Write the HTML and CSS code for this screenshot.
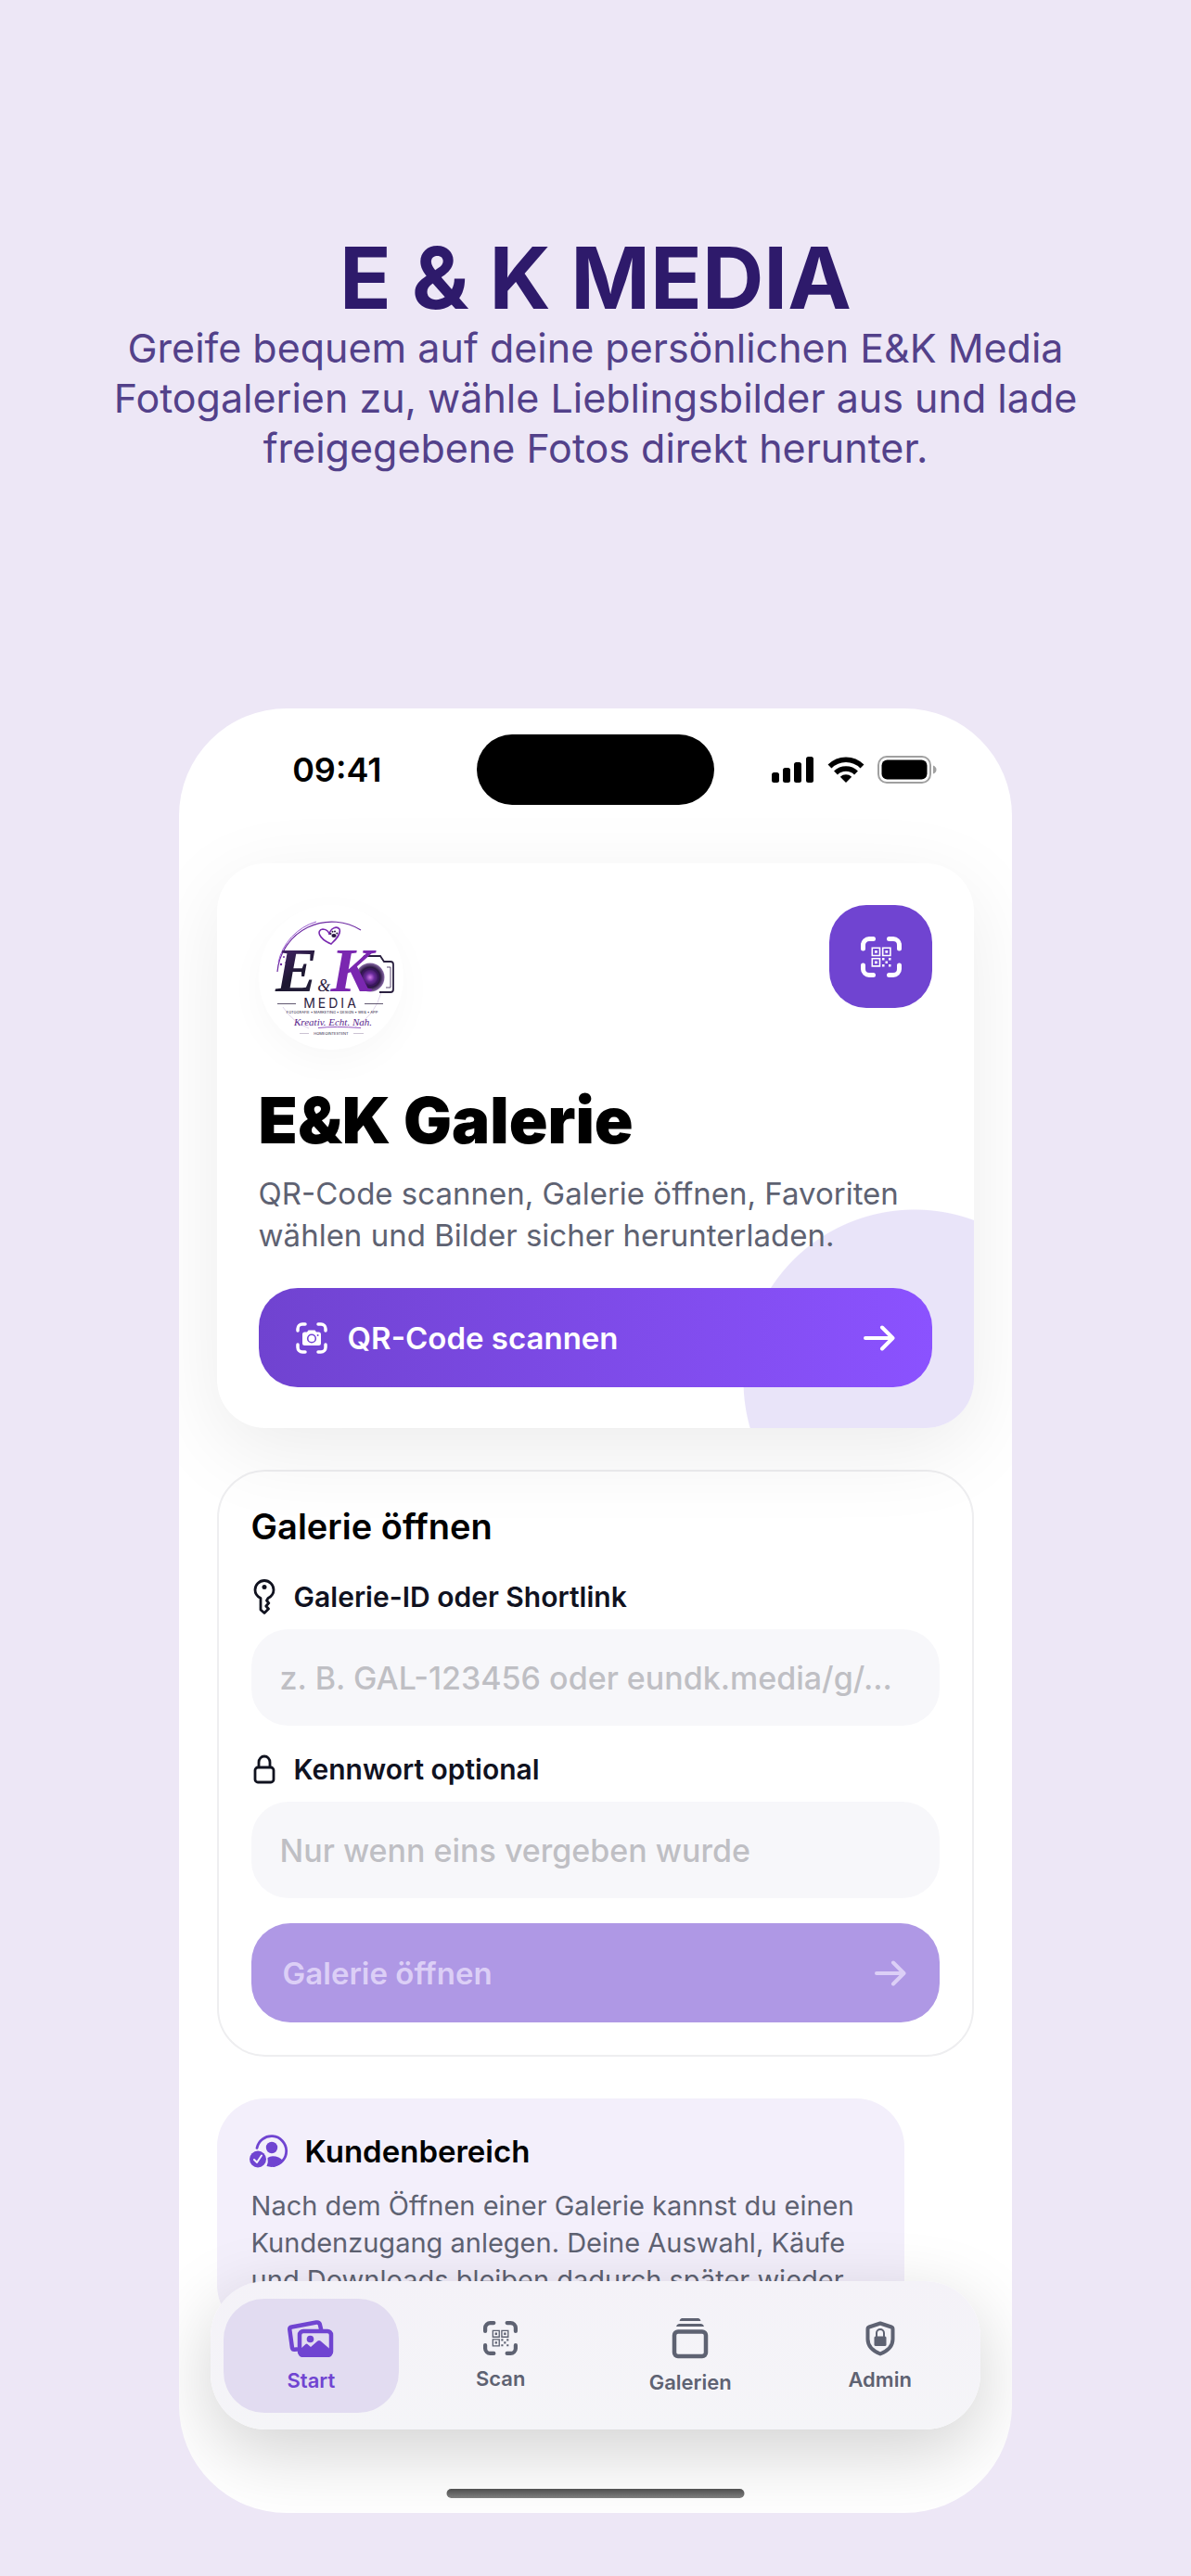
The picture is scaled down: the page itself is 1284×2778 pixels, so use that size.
FILE: index.html
```html
<!DOCTYPE html>
<html lang="de">
<head>
  <meta charset="UTF-8" />
  <meta name="viewport" content="width=device-width, initial-scale=1" />
  <title>E &amp; K MEDIA</title>
  <link rel="stylesheet" href="styles.css">
</head>
<body>
  <!-- shared symbols -->
  <svg class="symbols" aria-hidden="true">
    <symbol id="icon-qr" viewBox="0 0 44 44">
      <g fill="none" stroke="currentColor" stroke-width="5" stroke-linecap="round">
        <path d="M2.5 13V9A6.500 6.500 0 0 1 9 2.500H13.500M30.500 2.500H35A6.500 6.500 0 0 1 41.500 9V13M41.500 31V35A6.500 6.500 0 0 1 35 41.500H30.500M13.500 41.500H9A6.500 6.500 0 0 1 2.500 35V31"/>
      </g>
      <g fill="none" stroke="currentColor" stroke-width="1.600">
        <path d="M12.300 12.300h8.200v8.200h-8.200zM23.700 12.300h8.200v8.200h-8.200zM12.300 23.700h8.200v8.200h-8.200z"/>
      </g>
      <path fill="currentColor" d="M15 15h2.800v2.800H15zM26.400 15h2.800v2.800h-2.800zM15 26.400h2.800v2.800H15zM23 23h2.500v2.500H23zM30 23h2.500v2.500H30zM26.500 26.500H29V29h-2.500zM23 30h2.500v2.500H23zM30 30h2.500v2.500H30z"/>
    </symbol>
    <symbol id="icon-arrow" viewBox="0 0 34 28">
      <path d="M2 14H31M20 2.500L31.500 14L20 25.500" fill="none" stroke="currentColor" stroke-width="4" stroke-linecap="round" stroke-linejoin="round"/>
    </symbol>
  </svg>

  <header class="intro">
    <h1>E &amp; K MEDIA</h1>
    <p>Greife bequem auf deine persönlichen E&amp;K Media Fotogalerien zu, wähle Lieblingsbilder aus und lade freigegebene Fotos direkt herunter.</p>
  </header>

  <div class="phone">
    <div class="status">
      <span class="time">09:41</span>
      <div class="island"></div>
      <div class="signals">
        <svg width="46" height="28" viewBox="0 0 46 28">
          <rect x="0" y="17" width="8" height="11" rx="2.500"/>
          <rect x="12" y="12" width="8" height="16" rx="2.500"/>
          <rect x="24" y="6" width="8" height="22" rx="2.500"/>
          <rect x="37" y="0" width="8" height="28" rx="2.500"/>
        </svg>
        <svg width="40" height="28" viewBox="0 0 40 28">
          <g fill="none" stroke="#000" stroke-width="5.500">
            <path d="M2.500 10.500A24.500 24.500 0 0 1 37.500 10.500"/>
            <path d="M9 17.500A15.500 15.500 0 0 1 31 17.500"/>
          </g>
          <path d="M20 28L13.800 21.800A9 9 0 0 1 26.200 21.800Z"/>
        </svg>
        <svg width="64" height="30" viewBox="0 0 64 30">
          <rect x="1" y="1" width="56" height="28" rx="9" fill="none" stroke="#a0a0a0" stroke-width="2"/>
          <rect x="4.500" y="4.500" width="49" height="21" rx="6"/>
          <path d="M60 10.500Q63.500 12 63.500 15T60 19.500Z" fill="#a0a0a0"/>
        </svg>
      </div>
    </div>

    <main class="content">
      <section class="card hero">
        <div class="hero-top">
          <div class="logo">
            <svg viewBox="8 6 156 156" role="img" aria-label="E&amp;K Media">
              <defs>
                <linearGradient id="ink" x1="0" y1="0" x2="1" y2="1">
                  <stop offset="0" stop-color="#5a2a86"/>
                  <stop offset=".4" stop-color="#1c1730"/>
                  <stop offset="1" stop-color="#3b3354"/>
                </linearGradient>
                <radialGradient id="lens">
                  <stop offset="0" stop-color="#d27bea"/>
                  <stop offset=".3" stop-color="#6a2a9c"/>
                  <stop offset=".7" stop-color="#2b1742"/>
                  <stop offset="1" stop-color="#8a6ba8"/>
                </radialGradient>
              </defs>
              <path d="M28 78A59 59 0 0 1 118 33" fill="none" stroke="#6e2ba3" stroke-width="1.200"/>
              <path d="M29 68A59 59 0 0 1 70 24" fill="none" stroke="#9a5cd0" stroke-width="1"/>
              <path d="M34 116A59 59 0 0 0 62 139M140 100A59 59 0 0 1 112 137" fill="none" stroke="#c9b8dc" stroke-width=".6"/>
              <!-- heart with paw -->
              <path d="M86 48C72 42 70 33 77 32C82 32 84 36 84 38C85 31 92 28 95 32C97 38 90 44 86 48Z" fill="none" stroke="#7a2bb0" stroke-width="1.600"/>
              <g fill="#2b1742"><ellipse cx="89" cy="39" rx="2.600" ry="2"/><circle cx="85.500" cy="37" r="1"/><circle cx="87.500" cy="34.800" r="1"/><circle cx="90" cy="34.500" r="1"/><circle cx="92.300" cy="36.500" r="1"/></g>
              <g fill="#6e2ba3"><circle cx="35" cy="62" r="1"/><circle cx="32" cy="70" r="1.200"/><circle cx="37" cy="68" r=".8"/></g>
              <!-- camera -->
              <path d="M118 66L122 61H139L143 67H150Q153 67 153 70V97Q153 100 150 100H138" fill="#fff" stroke="#2b2140" stroke-width="1.800"/>
              <path d="M146 73H150V95H145" fill="none" stroke="#5c4a73"/>
              <circle cx="128" cy="84" r="15.500" fill="url(#lens)"/>
              <circle cx="128" cy="84" r="9" fill="none" stroke="#3a1560" stroke-width="1.500"/>
              <text class="logo-script" x="26" y="99"><tspan class="logo-e">E</tspan><tspan class="logo-amp">&amp;</tspan><tspan class="logo-k">K</tspan></text>
              <path d="M28 112.500H48M122 112.500H142" stroke="#3a2f4c" stroke-width=".8"/>
              <text class="logo-name" x="86" y="117">MEDIA</text>
              <text class="logo-tag" x="87" y="123">FOTOGRAFIE • MARKETING • DESIGN • WEB • APP</text>
              <text class="logo-claim" x="88" y="136">Kreativ. Echt. Nah.</text>
              <path d="M72 138.500Q90 136.500 118 138.500" fill="none" stroke="#7a2bb0" stroke-width=".8"/>
              <path d="M52 144.500H62M110 144.500H121" stroke="#a79bb5" stroke-width=".6"/>
              <text class="logo-tag" x="86" y="146">HOMEOINTESTENT</text>
            </svg>
          </div>
          <button class="qr-button" type="button" aria-label="QR-Code scannen">
            <svg width="44" height="44"><use href="#icon-qr"/></svg>
          </button>
        </div>
        <h2>E&amp;K Galerie</h2>
        <p>QR-Code scannen, Galerie öffnen, Favoriten wählen und Bilder sicher herunterladen.</p>
        <button class="button primary" type="button">
          <svg width="34" height="34" viewBox="0 0 34 34">
            <path d="M2 9V7A5 5 0 0 1 7 2H10M24 2H27A5 5 0 0 1 32 7V9M32 24V27A5 5 0 0 1 27 32H24M10 32H7A5 5 0 0 1 2 27V24" fill="none" stroke="#fff" stroke-width="3.500" stroke-linecap="round"/>
            <path d="M9.500 10.500H12L13.500 8.500H20.500L22 10.500H24.500A2.500 2.500 0 0 1 27 13V22.500A2.500 2.500 0 0 1 24.500 25H9.500A2.500 2.500 0 0 1 7 22.500V13A2.500 2.500 0 0 1 9.500 10.500Z" fill="#fff"/>
            <circle cx="17" cy="17.500" r="4.300" fill="none" stroke="#7345d6" stroke-width="1.600"/>
            <circle cx="23.600" cy="14" r="1" fill="#7345d6"/>
          </svg>
          <span>QR-Code scannen</span>
          <svg class="arrow" width="34" height="28"><use href="#icon-arrow"/></svg>
        </button>
      </section>

      <form class="card open">
        <h3>Galerie öffnen</h3>
        <label for="gallery">
          <svg width="24" height="38" viewBox="0 0 24 38">
            <path d="M8 20.500V33L12 36.500L16.500 32L13.800 29L16.800 25.800L14.500 23L16 20.500Q22 17.500 22 11.500A10 10 0 0 0 2 11.500Q2 17.500 8 20.500Z" fill="none" stroke="currentColor" stroke-width="2.800" stroke-linejoin="round"/>
            <circle cx="12" cy="8.500" r="2.500" fill="currentColor"/>
          </svg>
          Galerie-ID oder Shortlink
        </label>
        <input id="gallery" type="text" placeholder="z. B. GAL-123456 oder eundk.media/g/...">
        <label for="password">
          <svg width="24" height="32" viewBox="0 0 24 32">
            <rect x="2" y="14" width="20" height="16" rx="3" fill="none" stroke="currentColor" stroke-width="2.800"/>
            <path d="M6 14V8.500A6 6.500 0 0 1 18 8.500V14" fill="none" stroke="currentColor" stroke-width="2.800"/>
          </svg>
          Kennwort optional
        </label>
        <input id="password" type="password" placeholder="Nur wenn eins vergeben wurde">
        <button class="button" type="submit" disabled>
          <span>Galerie öffnen</span>
          <svg class="arrow" width="34" height="28"><use href="#icon-arrow"/></svg>
        </button>
      </form>

      <section class="card customer">
        <h4>
          <svg width="42" height="36" viewBox="0 0 42 36">
            <path d="M8 14.500A16 16 0 1 1 26 33.500" fill="none" stroke="currentColor" stroke-width="2.800" stroke-linecap="round"/>
            <circle cx="24" cy="14" r="6.200" fill="currentColor"/>
            <path d="M18.500 34Q20.500 30 19.500 25Q22 23.300 25 23.300Q32 23.300 36 28Q31 35 23.500 35Z" fill="currentColor"/>
            <circle cx="9" cy="26.500" r="9" fill="currentColor"/>
            <path d="M5 27L8 30L13 22.500" fill="none" stroke="#f3effb" stroke-width="2" stroke-linecap="round" stroke-linejoin="round"/>
          </svg>
          Kundenbereich
        </h4>
        <p>Nach dem Öffnen einer Galerie kannst du einen Kundenzugang anlegen. Deine Auswahl, Käufe und Downloads bleiben dadurch später wieder</p>
      </section>
    </main>

    <nav class="tabs">
      <a class="tab active" href="#start">
        <svg width="50" height="40" viewBox="0 0 50 40">
          <path d="M10 31.500L7.500 31.800Q5.500 32 5 30L2.300 10.500Q2 8 4.500 7.500L31 2.500Q34 2 34.800 4.500L36 9.500" fill="none" stroke="currentColor" stroke-width="4.500" stroke-linecap="round"/>
          <rect x="13" y="12" width="34" height="26" rx="4" fill="none" stroke="currentColor" stroke-width="4.500"/>
          <circle cx="24.500" cy="20.500" r="3.800" fill="currentColor"/>
          <path d="M14 31L19.500 26Q20.500 25.200 21.500 26L25 29L32.500 22.500Q34 21.500 35.500 22.500L46 31.500V38H14Z" fill="currentColor"/>
        </svg>
        Start
      </a>
      <a class="tab" href="#scan">
        <svg width="37" height="37"><use href="#icon-qr"/></svg>
        Scan
      </a>
      <a class="tab" href="#galerien">
        <svg width="40" height="44" viewBox="0 0 40 44">
          <path d="M11 0H29Q31 .5 31.500 3H8.500Q9 .5 11 0ZM8 6H32Q34.500 6.500 35 9H5Q5.500 6.500 8 6Z" fill="currentColor"/>
          <rect x="3" y="14.500" width="34" height="26.500" rx="4" fill="none" stroke="currentColor" stroke-width="4.500"/>
        </svg>
        Galerien
      </a>
      <a class="tab" href="#admin">
        <svg width="32" height="38" viewBox="0 0 32 38">
          <path d="M16 2.500L28 6.500Q29.500 7 29.500 9V19.500Q29.500 30 16 35.500Q2.500 30 2.500 19.500V9Q2.500 7 4 6.500Z" fill="none" stroke="currentColor" stroke-width="4" stroke-linejoin="round"/>
          <rect x="9.500" y="16.500" width="13" height="10.500" rx="1.500" fill="currentColor"/>
          <path d="M12 17V13A4 4 0 0 1 20 13V17" fill="none" stroke="currentColor" stroke-width="2"/>
        </svg>
        Admin
      </a>
    </nav>
    <div class="home-bar"></div>
  </div>
</body>
</html>
```
FILE: styles.css
```css
* {
  box-sizing: border-box;
}
body {
  margin: 0;
  padding-bottom: 68px;
  background: #ede7f6;
  color: #000;
  font-family: Inter, "Liberation Sans", sans-serif;
}
h1, h2, h3, h4, p {
  margin: 0;
}
button, input {
  font-family: inherit;
  border: 0;
}
.symbols {
  display: none;
}

/* intro */
.intro {
  padding: 252px 100px 254px;
  text-align: center;
}
.intro h1 {
  color: #2e1a6b;
  font-size: 92px;
  font-weight: 700;
  line-height: 96px;
}
.intro p {
  color: #53418a;
  font-size: 43px;
  line-height: 54px;
}

/* phone */
.phone {
  position: relative;
  width: 70%;
  margin: 0 auto;
  padding-bottom: 194px;
  border-radius: 116px;
  background: #fff;
  overflow: hidden;
}
.status {
  display: grid;
  grid-template-columns: 1fr 256px 1fr;
  align-items: center;
  justify-items: center;
  padding: 28px 20px 0;
}
.time {
  font-size: 36px;
  font-weight: 600;
}
.island {
  width: 100%;
  height: 76px;
  border-radius: 38px;
  background: #000;
}
.signals {
  display: flex;
  align-items: center;
  gap: 14px;
}

/* cards */
.content {
  display: flex;
  flex-direction: column;
  gap: 45px;
  padding: 63px 41px 0;
}
.card {
  border-radius: 52px;
  background: #fff;
}
.hero {
  position: relative;
  padding: 45px 45px 44px;
  box-shadow: 0 24px 90px rgba(0, 0, 0, 0.08);
}
.hero::before {
  content: "";
  position: absolute;
  inset: 0;
  border-radius: inherit;
  background: radial-gradient(circle 185px at calc(100% - 64px) calc(100% - 51px), #e9e4f9 184px, transparent 185px);
}
.hero > * {
  position: relative;
}
.hero-top {
  display: flex;
  justify-content: space-between;
  align-items: flex-start;
}
.logo {
  width: 156px;
  height: 156px;
  border-radius: 50%;
  box-shadow: 0 12px 40px rgba(0, 0, 0, 0.03);
}
.logo svg {
  display: block;
}
.logo-script {
  font-family: "Liberation Serif", serif;
  font-size: 68px;
  font-style: italic;
  font-weight: 700;
}
.logo-e {
  fill: url(#ink);
}
.logo-k {
  fill: #7a27b0;
}
.logo-amp {
  font-size: 18px;
  font-weight: 400;
  fill: #2b2140;
}
.logo-name, .logo-tag, .logo-claim {
  text-anchor: middle;
  fill: #2b2140;
}
.logo-name {
  font-size: 14px;
  letter-spacing: 3px;
}
.logo-tag {
  font-size: 4px;
}
.logo-claim {
  font-family: "Liberation Serif", serif;
  font-size: 11px;
  font-style: italic;
  fill: #5a1f8c;
}
.qr-button {
  display: flex;
  align-items: center;
  justify-content: center;
  width: 111px;
  height: 111px;
  border-radius: 40px;
  background: #7044d1;
  color: #fff;
}
.hero h2 {
  margin-top: 36px;
  font-size: 69px;
  font-weight: 900;
  line-height: 80px;
}
.hero p {
  margin: 17px 0 34px;
  color: #5e6272;
  font-size: 33px;
  line-height: 45px;
}
.button {
  display: flex;
  align-items: center;
  gap: 22px;
  width: 100%;
  height: 107px;
  padding: 0 36px 0 34px;
  border-radius: 42px;
  font-size: 33px;
  font-weight: 600;
}
.button .arrow {
  margin-left: auto;
}
.button.primary {
  padding: 0 40px;
  background: linear-gradient(90deg, #7043d0, #8b52ff);
  color: #fff;
}
.button:disabled {
  background: #af98e5;
  color: #dccff6;
}

/* open gallery form */
.open {
  display: flex;
  flex-direction: column;
  padding: 35px;
  border: 2px solid #eeeef0;
}
.open h3 {
  margin-bottom: 32px;
  font-size: 38px;
  font-weight: 600;
  line-height: 48px;
}
.open label {
  display: flex;
  align-items: center;
  gap: 20px;
  height: 40px;
  margin-bottom: 15px;
  padding-left: 2px;
  color: #10121f;
  font-size: 30px;
  font-weight: 600;
}
.open input {
  width: 100%;
  height: 104px;
  margin-bottom: 27px;
  padding: 0 31px;
  border-radius: 40px;
  background: #f7f7fa;
  font-size: 34px;
  font-weight: 500;
}
.open input::placeholder {
  color: #bfbfc4;
  opacity: 1;
}

/* customer area */
.customer {
  margin-right: 75px;
  padding: 35px 35px 37px;
  background: #f3effb;
}
.customer h4 {
  display: flex;
  align-items: center;
  gap: 18px;
  margin-bottom: 17px;
  font-size: 33px;
  font-weight: 600;
  line-height: 44px;
}
.customer h4 svg {
  color: #7044d1;
}
.customer p {
  padding-left: 2px;
  color: #5e6272;
  font-size: 29px;
  line-height: 40px;
}

/* tab bar floats over the scrolled content */
.tabs {
  position: absolute;
  left: 34px;
  right: 34px;
  bottom: 90px;
  display: grid;
  grid-template-columns: repeat(4, 1fr);
  gap: 15px;
  padding: 19px 14px 18px;
  border-radius: 60px;
  background: linear-gradient(#f4f2f8, #f5f5f8);
  box-shadow: 0 24px 80px rgba(0, 0, 0, 0.18);
}
.tab {
  display: flex;
  flex-direction: column;
  align-items: center;
  justify-content: center;
  gap: 12px;
  height: 123px;
  border-radius: 44px;
  color: #5e6272;
  font-size: 22px;
  font-weight: 600;
  line-height: 26px;
  text-decoration: none;
}
.tab.active {
  background: #e2dcf1;
  color: #7044d1;
}
.home-bar {
  position: absolute;
  left: 50%;
  bottom: 16px;
  width: 321px;
  height: 10px;
  border-radius: 5px;
  background: linear-gradient(#4f4f4f, #7f7f7f);
  transform: translateX(-50%);
}
```
